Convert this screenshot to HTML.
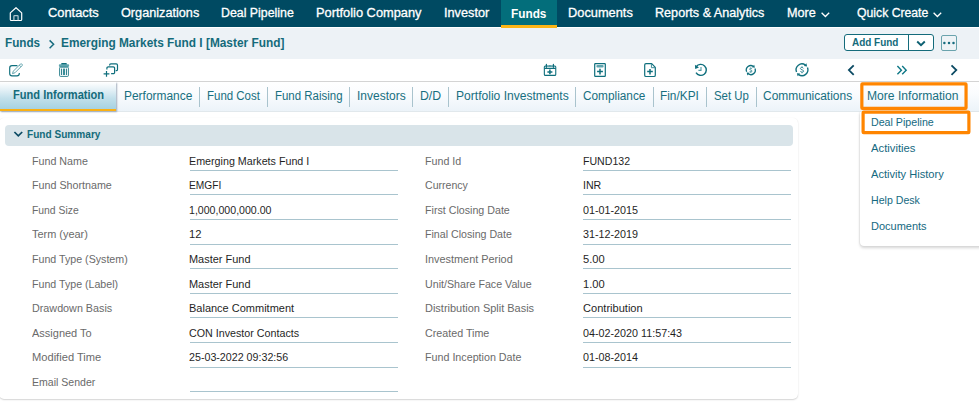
<!DOCTYPE html>
<html><head><meta charset="utf-8"><title>Funds</title>
<style>
html,body{margin:0;padding:0;}
body{width:979px;height:407px;position:relative;overflow:hidden;background:#fff;font-family:"Liberation Sans",sans-serif;}
.t{position:absolute;white-space:pre;transform-origin:0 0;}
.abs{position:absolute;}
.ul{position:absolute;height:1px;background:#a9c4ce;}
.sep{position:absolute;top:87px;height:20px;width:1px;background:#a9c3cd;}
svg{position:absolute;overflow:visible;}
</style></head><body>
<!-- NAV -->
<div class="abs" style="left:0;top:0;width:979px;height:27px;background:#004a62"></div>
<div class="abs" style="left:501px;top:0;width:56px;height:25px;background:#036e7b;border-bottom:3px solid #fcb515"></div>
<!-- BREADCRUMB BAR -->
<div class="abs" style="left:0;top:28px;width:979px;height:31px;background:#edf2f6"></div>
<div class="abs" style="left:844px;top:34px;width:88px;height:15px;border:1px solid #146b7b;border-radius:3px;background:#fff"></div>
<div class="abs" style="left:908px;top:34px;width:1px;height:17px;background:#146b7b"></div>
<div class="abs" style="left:940.5px;top:34.5px;width:14px;height:14px;border:1.5px solid #6aa3ad;border-radius:2px;background:#eef3f6"></div>
<!-- TOOLBAR -->
<div class="abs" style="left:0;top:81px;width:979px;height:1px;background:#d4d4d4"></div>
<!-- TABS -->
<div class="abs" style="left:0;top:82px;width:979px;height:29px;background:linear-gradient(#ffffff,#fafcfe 40%,#ecf3f9)"></div>
<div class="abs" style="left:0;top:111px;width:979px;height:1px;background:#e1e8ec"></div>
<div class="abs" style="left:0;top:82px;width:116px;height:27px;background:linear-gradient(#ffffff 0%,#e3f0f6 30%,#c2e0eb 60%,#a6d2e2 100%);border-bottom:2px solid #fbb114;box-shadow:1px 1px 1.5px rgba(80,100,130,.5)"></div>
<div class="sep" style="left:199px"></div><div class="sep" style="left:267px"></div><div class="sep" style="left:349px"></div><div class="sep" style="left:412px"></div><div class="sep" style="left:448px"></div><div class="sep" style="left:575px"></div><div class="sep" style="left:653px"></div><div class="sep" style="left:706px"></div><div class="sep" style="left:756px"></div>
<!-- CARD -->
<div class="abs" style="left:-1px;top:118px;width:799px;height:281px;border-radius:5px;background:#fff;box-shadow:0 1px 1.5px rgba(0,0,0,.17),0 0 1px rgba(0,0,0,.06)"></div>
<div class="abs" style="left:5px;top:125px;width:788px;height:21px;border-radius:4px;background:#d9e4e9"></div>
<div class="ul" style="left:190px;top:170px;width:208px"></div><div class="ul" style="left:190px;top:194px;width:208px"></div><div class="ul" style="left:190px;top:219px;width:208px"></div><div class="ul" style="left:190px;top:244px;width:208px"></div><div class="ul" style="left:190px;top:268px;width:208px"></div><div class="ul" style="left:190px;top:293px;width:208px"></div><div class="ul" style="left:190px;top:317px;width:208px"></div><div class="ul" style="left:190px;top:342px;width:208px"></div><div class="ul" style="left:190px;top:367px;width:208px"></div><div class="ul" style="left:190px;top:391px;width:208px"></div><div class="ul" style="left:583px;top:170px;width:208px"></div><div class="ul" style="left:583px;top:194px;width:208px"></div><div class="ul" style="left:583px;top:219px;width:208px"></div><div class="ul" style="left:583px;top:244px;width:208px"></div><div class="ul" style="left:583px;top:268px;width:208px"></div><div class="ul" style="left:583px;top:293px;width:208px"></div><div class="ul" style="left:583px;top:317px;width:208px"></div><div class="ul" style="left:583px;top:342px;width:208px"></div><div class="ul" style="left:583px;top:367px;width:208px"></div>
<!-- DROPDOWN -->
<div class="abs" style="left:860px;top:112px;width:130px;height:134px;background:#fff;border-radius:0 0 0 4px;box-shadow:0 2px 3px rgba(0,0,0,.17),-1px 0 1px rgba(0,0,0,.05)"></div>
<svg width="979" height="407" viewBox="0 0 979 407" style="left:0;top:0"><rect x="861.85" y="83.95" width="104.2" height="24.45" rx="0.6" fill="none" stroke="#ff8500" stroke-width="3.2"/><rect x="863.1" y="112.05" width="105.8" height="20.55" rx="0.6" fill="#fff" stroke="#ff8500" stroke-width="3.2"/></svg>
<svg width="979" height="407" viewBox="0 0 979 407" style="left:0;top:0"><path d="M10.3 12.9L16 7.7L21.7 12.9V19.4a1.1 1.1 0 0 1 -1.1 1.1H11.4a1.1 1.1 0 0 1 -1.1 -1.1Z" fill="none" stroke="#fff" stroke-width="1.2" stroke-linejoin="round"/><path d="M13.9 20.3V16.4a0.7 0.7 0 0 1 0.7 -0.7h2.8a0.7 0.7 0 0 1 0.7 0.7V20.3" fill="none" stroke="#a9c3cc" stroke-width="1.3"/><path d="M821.6 12.8l3.8 3.7l3.8 -3.7" fill="none" stroke="#fff" stroke-width="1.3"/><path d="M933.6 12.8l3.8 3.7l3.8 -3.7" fill="none" stroke="#fff" stroke-width="1.3"/><path d="M49.6 40.4l4 3.9l-4 3.9" fill="none" stroke="#176c7f" stroke-width="1.5"/><path d="M917.2 41.5l3.8 3.7l3.8 -3.7" fill="none" stroke="#0d6072" stroke-width="1.9"/><circle cx="944.4" cy="42.9" r="1.25" fill="#176c7f"/><circle cx="949" cy="42.9" r="1.25" fill="#176c7f"/><circle cx="953.5" cy="42.9" r="1.25" fill="#176c7f"/><path d="M17.4 65.6H12a2.3 2.3 0 0 0 -2.3 2.3v5.7a2.3 2.3 0 0 0 2.3 2.3h5a2.3 2.3 0 0 0 2.3 -2.3V73" fill="none" stroke="#0f6f7d" stroke-width="1.15"/><g transform="translate(12.5 73.6) rotate(-45)"><path d="M0 0L2.3 -1.15H12.5a0.8 0.8 0 0 1 0.8 0.8v0.7a0.8 0.8 0 0 1 -0.8 0.8H2.3Z" fill="#fff" stroke="#3a8e99" stroke-width="0.75" stroke-linejoin="round"/><path d="M10.8 -1.15v2.3" stroke="#3a8e99" stroke-width="0.75"/></g><rect x="61.2" y="63.1" width="5.6" height="2" rx="0.6" fill="#0f6f7d"/><rect x="58.9" y="64.3" width="10.2" height="2.6" rx="0.8" fill="#5fa5af"/><rect x="59.6" y="67.2" width="8.8" height="9.2" rx="0.9" fill="none" stroke="#1d7886" stroke-width="0.9"/><rect x="61.1" y="68.6" width="1" height="6.4" fill="#1d7886"/><rect x="63" y="68.6" width="2" height="6.4" fill="#3a8d99"/><rect x="65.9" y="68.6" width="1" height="6.4" fill="#1d7886"/><path d="M109.6 65.6v-0.4a1.3 1.3 0 0 1 1.3 -1.3h5.3a1.3 1.3 0 0 1 1.3 1.3v4.2a1.3 1.3 0 0 1 -1.3 1.3h-0.5" fill="none" stroke="#0f6f7d" stroke-width="1.2"/><path d="M106.9 69.4v-1.2a1.3 1.3 0 0 1 1.3 -1.3h5.1a1.3 1.3 0 0 1 1.3 1.3v4.2a1.3 1.3 0 0 1 -1.3 1.3h-2.2" fill="none" stroke="#0f6f7d" stroke-width="1.2"/><path d="M103.6 73.8h5.8M106.5 70.9v5.8" stroke="#0f6f7d" stroke-width="1.2"/><rect x="544.35" y="66.1" width="11.4" height="9.3" rx="1" fill="none" stroke="#0f6f7d" stroke-width="1.1"/><rect x="544.8" y="65.4" width="10.5" height="2.8" fill="#7fb5bd" opacity="0.5"/><path d="M544.35 68.5h11.4" stroke="#0f6f7d" stroke-width="1"/><path d="M546.4 64.3v3M553.4 64.3v3" stroke="#0f6f7d" stroke-width="1.2" stroke-linecap="round"/><circle cx="549.9" cy="65.9" r="1" fill="#4f9aa5"/><path d="M547.4 71.9h5M549.9 69.5v4.8" stroke="#0f6f7d" stroke-width="1.5"/><rect x="594.7" y="63.6" width="10.6" height="12.8" rx="0.6" fill="none" stroke="#0f6f7d" stroke-width="1.2"/><rect x="596.4" y="65.1" width="7.2" height="2.3" rx="1" fill="#5fa4ae"/><path d="M597.1 71.5h5.8M600 68.8v5.6" stroke="#0f6f7d" stroke-width="1.5"/><path d="M651.7 63.6H646a1.3 1.3 0 0 0 -1.3 1.3v10.3a1.3 1.3 0 0 0 1.3 1.3h8a1.3 1.3 0 0 0 1.3 -1.3V67.4Z" fill="none" stroke="#0f6f7d" stroke-width="1.2" stroke-linejoin="round"/><path d="M651.4 63.8v3.9h3.8" fill="none" stroke="#3d8c98" stroke-width="1"/><path d="M647.2 71.6h5.6M650 69v5.4" stroke="#0f6f7d" stroke-width="1.5"/><path d="M696.29 66.75A5.5 5.5 0 1 1 696.04 72.65" fill="none" stroke="#0f6f7d" stroke-width="1.4"/><path d="M694.9 64.8L695.2 69L699 67.6Z" fill="#0f6f7d"/><path d="M701 67v3.4h-2.6" fill="none" stroke="#4f9aa5" stroke-width="1.1"/><path d="M746.63 71.79A4.5 4.5 0 0 1 753.38 66.41" fill="none" stroke="#0f6f7d" stroke-width="1.3"/><path d="M754.97 68.41A4.5 4.5 0 0 1 748.22 73.79" fill="none" stroke="#0f6f7d" stroke-width="1.3"/><path d="M754.87 67.71L754.21 64.78L751.89 67.36Z" fill="#0f6f7d"/><path d="M746.73 72.49L747.39 75.42L749.71 72.84Z" fill="#0f6f7d"/><path d="M751.92 69.05C751.64 68.07 749.54 68.07 749.61 69.19C749.68 70.24 752.06 69.96 752.06 71.08C752.06 72.13 749.82 72.13 749.54 71.15M750.80 67.51L750.80 68.28M750.80 71.92L750.80 72.69" fill="none" stroke="#1f7c8a" stroke-width="0.83"/><path d="M796.53 72.01A5.9 5.9 0 0 1 805.38 64.97" fill="none" stroke="#0f6f7d" stroke-width="1.4"/><path d="M807.47 67.59A5.9 5.9 0 0 1 798.62 74.63" fill="none" stroke="#0f6f7d" stroke-width="1.4"/><path d="M807.10 66.45L806.38 63.28L803.87 66.07Z" fill="#0f6f7d"/><path d="M796.90 73.15L797.62 76.32L800.13 73.53Z" fill="#0f6f7d"/><path d="M803.49 68.40C803.12 67.09 800.32 67.09 800.41 68.59C800.51 69.99 803.68 69.61 803.68 71.11C803.68 72.51 800.69 72.51 800.32 71.20M802.00 66.35L802.00 67.37M802.00 72.23L802.00 73.25" fill="none" stroke="#1f7c8a" stroke-width="0.86"/><path d="M853.7 65.3L848.9 70.1L853.7 74.9" fill="none" stroke="#0b4a63" stroke-width="1.8"/><path d="M951.5 65.3L956.3 70.1L951.5 74.9" fill="none" stroke="#0b4a63" stroke-width="1.8"/><path d="M897.4 66.1l4 4.1l-4 4.1M902.2 66.1l4 4.1l-4 4.1" fill="none" stroke="#0d7786" stroke-width="1.4"/><path d="M14.4 132l3.9 3.9l3.9 -3.9" fill="none" stroke="#0b4a63" stroke-width="1.7"/></svg>
<!--TEXT-->
<span class="t" style="-webkit-text-stroke:0.3px #fff;left:47.66px;top:6.62px;font-size:12.5px;line-height:12.5px;font-weight:400;color:#ffffff;transform:scaleX(1.0300)">Contacts</span>
<span class="t" style="-webkit-text-stroke:0.3px #fff;left:120.67px;top:6.62px;font-size:12.5px;line-height:12.5px;font-weight:400;color:#ffffff;transform:scaleX(1.0143)">Organizations</span>
<span class="t" style="-webkit-text-stroke:0.3px #fff;left:221.38px;top:6.62px;font-size:12.5px;line-height:12.5px;font-weight:400;color:#ffffff;transform:scaleX(0.9885)">Deal Pipeline</span>
<span class="t" style="-webkit-text-stroke:0.3px #fff;left:316.36px;top:6.62px;font-size:12.5px;line-height:12.5px;font-weight:400;color:#ffffff;transform:scaleX(1.0262)">Portfolio Company</span>
<span class="t" style="-webkit-text-stroke:0.3px #fff;left:443.96px;top:6.62px;font-size:12.5px;line-height:12.5px;font-weight:400;color:#ffffff;transform:scaleX(1.0170)">Investor</span>
<span class="t" style="-webkit-text-stroke:0.3px #fff;left:568.36px;top:6.62px;font-size:12.5px;line-height:12.5px;font-weight:400;color:#ffffff;transform:scaleX(1.0252)">Documents</span>
<span class="t" style="-webkit-text-stroke:0.3px #fff;left:655.37px;top:6.62px;font-size:12.5px;line-height:12.5px;font-weight:400;color:#ffffff;transform:scaleX(1.0086)">Reports &amp; Analytics</span>
<span class="t" style="-webkit-text-stroke:0.3px #fff;left:787.27px;top:6.62px;font-size:12.5px;line-height:12.5px;font-weight:400;color:#ffffff;transform:scaleX(1.0120)">More</span>
<span class="t" style="-webkit-text-stroke:0.3px #fff;left:856.89px;top:6.62px;font-size:12.5px;line-height:12.5px;font-weight:400;color:#ffffff;transform:scaleX(0.9777)">Quick Create</span>
<span class="t" style="left:511.41px;top:7.92px;font-size:12.5px;line-height:12.5px;font-weight:700;color:#ffffff;transform:scaleX(0.9447)">Funds</span>
<span class="t" style="left:5.21px;top:37.02px;font-size:12.5px;line-height:12.5px;font-weight:700;color:#146b7b;transform:scaleX(0.9367)">Funds</span>
<span class="t" style="left:60.71px;top:37.02px;font-size:12.5px;line-height:12.5px;font-weight:700;color:#146b7b;transform:scaleX(0.9486)">Emerging Markets Fund I [Master Fund]</span>
<span class="t" style="left:852.30px;top:36.88px;font-size:10.5px;line-height:10.5px;font-weight:700;color:#146b7b;transform:scaleX(0.9482)">Add Fund</span>
<span class="t" style="left:12.75px;top:88.62px;font-size:12.5px;line-height:12.5px;font-weight:700;color:#146b7b;transform:scaleX(0.8867)">Fund Information</span>
<span class="t" style="left:123.80px;top:90.12px;font-size:12.5px;line-height:12.5px;font-weight:400;color:#176f80;transform:scaleX(0.9548)">Performance</span>
<span class="t" style="left:207.03px;top:90.12px;font-size:12.5px;line-height:12.5px;font-weight:400;color:#176f80;transform:scaleX(0.9177)">Fund Cost</span>
<span class="t" style="left:274.73px;top:90.12px;font-size:12.5px;line-height:12.5px;font-weight:400;color:#176f80;transform:scaleX(0.9168)">Fund Raising</span>
<span class="t" style="left:356.90px;top:90.12px;font-size:12.5px;line-height:12.5px;font-weight:400;color:#176f80;transform:scaleX(0.9587)">Investors</span>
<span class="t" style="left:420.39px;top:90.12px;font-size:12.5px;line-height:12.5px;font-weight:400;color:#176f80;transform:scaleX(0.9811)">D/D</span>
<span class="t" style="left:455.70px;top:90.12px;font-size:12.5px;line-height:12.5px;font-weight:400;color:#176f80;transform:scaleX(0.9658)">Portfolio Investments</span>
<span class="t" style="left:583.21px;top:90.12px;font-size:12.5px;line-height:12.5px;font-weight:400;color:#176f80;transform:scaleX(0.9456)">Compliance</span>
<span class="t" style="left:660.41px;top:90.12px;font-size:12.5px;line-height:12.5px;font-weight:400;color:#176f80;transform:scaleX(0.9470)">Fin/KPI</span>
<span class="t" style="left:714.13px;top:90.12px;font-size:12.5px;line-height:12.5px;font-weight:400;color:#176f80;transform:scaleX(0.9112)">Set Up</span>
<span class="t" style="left:763.40px;top:90.12px;font-size:12.5px;line-height:12.5px;font-weight:400;color:#176f80;transform:scaleX(0.9574)">Communications</span>
<span class="t" style="left:867.19px;top:90.12px;font-size:12.5px;line-height:12.5px;font-weight:400;color:#176f80;transform:scaleX(0.9687)">More Information</span>
<span class="t" style="left:870.67px;top:116.86px;font-size:11px;line-height:11px;font-weight:400;color:#14697f;transform:scaleX(0.9686)">Deal Pipeline</span>
<span class="t" style="left:870.84px;top:142.86px;font-size:11px;line-height:11px;font-weight:400;color:#14697f;transform:scaleX(1.0227)">Activities</span>
<span class="t" style="left:870.84px;top:168.86px;font-size:11px;line-height:11px;font-weight:400;color:#14697f;transform:scaleX(1.0092)">Activity History</span>
<span class="t" style="left:870.87px;top:194.66px;font-size:11px;line-height:11px;font-weight:400;color:#14697f;transform:scaleX(0.9633)">Help Desk</span>
<span class="t" style="left:870.85px;top:221.16px;font-size:11px;line-height:11px;font-weight:400;color:#14697f;transform:scaleX(0.9991)">Documents</span>
<span class="t" style="left:27.10px;top:128.65px;font-size:11.5px;line-height:11.5px;font-weight:700;color:#146b7b;transform:scaleX(0.8772)">Fund Summary</span>
<span class="t" style="left:31.67px;top:156.16px;font-size:11px;line-height:11px;font-weight:400;color:#6a6a6a;transform:scaleX(0.9723)">Fund Name</span>
<span class="t" style="left:189.36px;top:156.16px;font-size:11px;line-height:11px;font-weight:400;color:#1f1f1f;transform:scaleX(0.9740)">Emerging Markets Fund I</span>
<span class="t" style="left:31.66px;top:180.16px;font-size:11px;line-height:11px;font-weight:400;color:#6a6a6a;transform:scaleX(0.9738)">Fund Shortname</span>
<span class="t" style="left:189.39px;top:180.16px;font-size:11px;line-height:11px;font-weight:400;color:#1f1f1f;transform:scaleX(0.9267)">EMGFI</span>
<span class="t" style="left:31.68px;top:205.16px;font-size:11px;line-height:11px;font-weight:400;color:#6a6a6a;transform:scaleX(0.9426)">Fund Size</span>
<span class="t" style="left:189.37px;top:205.16px;font-size:11px;line-height:11px;font-weight:400;color:#1f1f1f;transform:scaleX(0.9632)">1,000,000,000.00</span>
<span class="t" style="left:31.65px;top:229.16px;font-size:11px;line-height:11px;font-weight:400;color:#6a6a6a;transform:scaleX(0.9939)">Term (year)</span>
<span class="t" style="left:189.34px;top:229.16px;font-size:11px;line-height:11px;font-weight:400;color:#1f1f1f;transform:scaleX(1.0196)">12</span>
<span class="t" style="left:31.67px;top:254.16px;font-size:11px;line-height:11px;font-weight:400;color:#6a6a6a;transform:scaleX(0.9681)">Fund Type (System)</span>
<span class="t" style="left:189.35px;top:254.16px;font-size:11px;line-height:11px;font-weight:400;color:#1f1f1f;transform:scaleX(0.9958)">Master Fund</span>
<span class="t" style="left:31.67px;top:279.16px;font-size:11px;line-height:11px;font-weight:400;color:#6a6a6a;transform:scaleX(0.9665)">Fund Type (Label)</span>
<span class="t" style="left:189.35px;top:279.16px;font-size:11px;line-height:11px;font-weight:400;color:#1f1f1f;transform:scaleX(0.9958)">Master Fund</span>
<span class="t" style="left:31.66px;top:303.16px;font-size:11px;line-height:11px;font-weight:400;color:#6a6a6a;transform:scaleX(0.9789)">Drawdown Basis</span>
<span class="t" style="left:189.35px;top:303.16px;font-size:11px;line-height:11px;font-weight:400;color:#1f1f1f;transform:scaleX(0.9994)">Balance Commitment</span>
<span class="t" style="left:31.65px;top:328.16px;font-size:11px;line-height:11px;font-weight:400;color:#6a6a6a;transform:scaleX(0.9993)">Assigned To</span>
<span class="t" style="left:189.36px;top:328.16px;font-size:11px;line-height:11px;font-weight:400;color:#1f1f1f;transform:scaleX(0.9734)">CON Investor Contacts</span>
<span class="t" style="left:31.64px;top:352.16px;font-size:11px;line-height:11px;font-weight:400;color:#6a6a6a;transform:scaleX(1.0118)">Modified Time</span>
<span class="t" style="left:189.37px;top:352.16px;font-size:11px;line-height:11px;font-weight:400;color:#1f1f1f;transform:scaleX(0.9710)">25-03-2022 09:32:56</span>
<span class="t" style="left:31.67px;top:377.16px;font-size:11px;line-height:11px;font-weight:400;color:#6a6a6a;transform:scaleX(0.9598)">Email Sender</span>
<span class="t" style="left:424.97px;top:156.16px;font-size:11px;line-height:11px;font-weight:400;color:#6a6a6a;transform:scaleX(0.9699)">Fund Id</span>
<span class="t" style="left:582.77px;top:156.16px;font-size:11px;line-height:11px;font-weight:400;color:#1f1f1f;transform:scaleX(0.9629)">FUND132</span>
<span class="t" style="left:424.97px;top:180.16px;font-size:11px;line-height:11px;font-weight:400;color:#6a6a6a;transform:scaleX(0.9611)">Currency</span>
<span class="t" style="left:582.77px;top:180.16px;font-size:11px;line-height:11px;font-weight:400;color:#1f1f1f;transform:scaleX(0.9650)">INR</span>
<span class="t" style="left:424.97px;top:205.16px;font-size:11px;line-height:11px;font-weight:400;color:#6a6a6a;transform:scaleX(0.9699)">First Closing Date</span>
<span class="t" style="left:582.76px;top:205.16px;font-size:11px;line-height:11px;font-weight:400;color:#1f1f1f;transform:scaleX(0.9788)">01-01-2015</span>
<span class="t" style="left:424.97px;top:229.16px;font-size:11px;line-height:11px;font-weight:400;color:#6a6a6a;transform:scaleX(0.9668)">Final Closing Date</span>
<span class="t" style="left:582.76px;top:229.16px;font-size:11px;line-height:11px;font-weight:400;color:#1f1f1f;transform:scaleX(0.9788)">31-12-2019</span>
<span class="t" style="left:424.96px;top:254.16px;font-size:11px;line-height:11px;font-weight:400;color:#6a6a6a;transform:scaleX(0.9891)">Investment Period</span>
<span class="t" style="left:582.74px;top:254.16px;font-size:11px;line-height:11px;font-weight:400;color:#1f1f1f;transform:scaleX(1.0125)">5.00</span>
<span class="t" style="left:424.97px;top:279.16px;font-size:11px;line-height:11px;font-weight:400;color:#6a6a6a;transform:scaleX(0.9702)">Unit/Share Face Value</span>
<span class="t" style="left:582.74px;top:279.16px;font-size:11px;line-height:11px;font-weight:400;color:#1f1f1f;transform:scaleX(1.0125)">1.00</span>
<span class="t" style="left:424.95px;top:303.16px;font-size:11px;line-height:11px;font-weight:400;color:#6a6a6a;transform:scaleX(0.9968)">Distribution Split Basis</span>
<span class="t" style="left:582.75px;top:303.16px;font-size:11px;line-height:11px;font-weight:400;color:#1f1f1f;transform:scaleX(1.0061)">Contribution</span>
<span class="t" style="left:424.96px;top:328.16px;font-size:11px;line-height:11px;font-weight:400;color:#6a6a6a;transform:scaleX(0.9736)">Created Time</span>
<span class="t" style="left:582.76px;top:328.16px;font-size:11px;line-height:11px;font-weight:400;color:#1f1f1f;transform:scaleX(0.9779)">04-02-2020 11:57:43</span>
<span class="t" style="left:424.96px;top:352.16px;font-size:11px;line-height:11px;font-weight:400;color:#6a6a6a;transform:scaleX(0.9739)">Fund Inception Date</span>
<span class="t" style="left:582.76px;top:352.16px;font-size:11px;line-height:11px;font-weight:400;color:#1f1f1f;transform:scaleX(0.9788)">01-08-2014</span>
</body></html>
